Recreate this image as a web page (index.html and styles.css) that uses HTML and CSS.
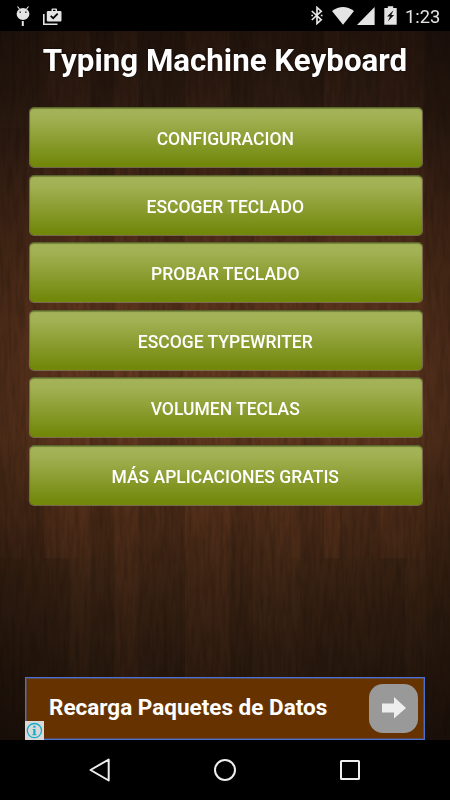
FILE: index.html
```html
<!DOCTYPE html>
<html lang="es">
<head>
    <meta charset="UTF-8">
    <meta name="viewport" content="width=device-width, initial-scale=1.0">
    <title>Typing Machine Keyboard</title>
    <link rel="stylesheet" href="styles.css">
</head>
<body>
    <div class="status-bar">
        <svg class="debug-icon" width="14" height="20" viewBox="0 0 14 20">
            <path d="M1.5 0.5L3.5 3M12.5 0.5L10.5 3" stroke="#e4e4e4" stroke-width="1.2"/>
            <ellipse cx="7" cy="8" rx="6.4" ry="6.1" fill="#e4e4e4"/>
            <path d="M6.8 15V20" stroke="#e4e4e4" stroke-width="2"/>
            <path d="M3.4 6.2h1.6M9 6.2h1.6" stroke="#222" stroke-width="1.3"/>
        </svg>
        <svg class="task-icon" width="19" height="18" viewBox="0 0 19 18">
            <path d="M0.8 6V16.2H14.5" fill="none" stroke="#e4e4e4" stroke-width="1.6"/>
            <path fill="#e4e4e4" fill-rule="evenodd" d="M5 3H8.5V1.5Q8.5 0.5 9.5 0.5H13Q14 0.5 14 1.5V3H17.3Q18.5 3 18.5 4.2V12.3Q18.5 13.5 17.3 13.5H5Q3.8 13.5 3.8 12.3V4.2Q3.8 3 5 3ZM10 1.8V3H12.5V1.8Z"/>
            <path d="M7.7 7.8L10.2 10.2L14.7 5.6" fill="none" stroke="#000" stroke-width="1.7"/>
        </svg>
        <span class="spacer"></span>
        <svg class="bluetooth-icon" width="12" height="19" viewBox="0 0 12 19">
            <path d="M0.8 5L10.2 13.8L6 17.5V1.5L10.2 5.2L0.8 14M0.3 9.5h1.7M9.8 9.5h1.7" fill="none" stroke="#e4e4e4" stroke-width="1.7"/>
        </svg>
        <svg class="wifi-icon" width="22" height="18" viewBox="0 0 22 18">
            <path d="M0 4Q11 -4 22 4L11 17.7Z" fill="#e4e4e4"/>
        </svg>
        <svg class="signal-icon" width="18" height="18" viewBox="0 0 18 18">
            <path d="M0 18L17.6 0V18Z" fill="#e4e4e4"/>
        </svg>
        <svg class="battery-icon" width="13" height="19" viewBox="0 0 13 19">
            <path d="M0.3 2H3.8V0.2H9.2V2H12.7V18.8H0.3Z" fill="#e4e4e4"/>
            <path d="M9.5 4.2L3 10.4H6L3.8 15.4L10.2 9H7.3Z" fill="#111"/>
        </svg>
        <span class="clock">1:23</span>
    </div>

    <div class="app">
        <svg class="wood" width="450" height="709" viewBox="0 0 450 709">
            <defs>
                <linearGradient id="shade" x1="0" y1="0" x2="0" y2="1">
                    <stop offset="0" stop-color="#23150d"/>
                    <stop offset="0.1" stop-color="#2c1b11"/>
                    <stop offset="0.21" stop-color="#412617"/>
                    <stop offset="0.33" stop-color="#54301b"/>
                    <stop offset="0.46" stop-color="#613820"/>
                    <stop offset="0.57" stop-color="#5f371f"/>
                    <stop offset="0.69" stop-color="#4c2c18"/>
                    <stop offset="0.78" stop-color="#3c2414"/>
                    <stop offset="0.88" stop-color="#2e1c10"/>
                    <stop offset="1" stop-color="#22150c"/>
                </linearGradient>
                <linearGradient id="sides">
                    <stop offset="0" stop-color="#000" stop-opacity="0.18"/>
                    <stop offset="0.2" stop-color="#000" stop-opacity="0"/>
                    <stop offset="0.8" stop-color="#000" stop-opacity="0"/>
                    <stop offset="1" stop-color="#000" stop-opacity="0.18"/>
                </linearGradient>
                <filter id="grain" x="0" y="0" width="100%" height="100%" color-interpolation-filters="sRGB">
                    <feTurbulence type="fractalNoise" baseFrequency="0.25 0.03" numOctaves="3" seed="4"/>
                    <feColorMatrix values="0 0 0 0 0  0 0 0 0 0  0 0 0 0 0  1.2 0 0 0 -0.45"/>
                </filter>
            </defs>
            <rect width="450" height="709" fill="url(#shade)"/>
            <g fill="#000" opacity="0.1">
                <rect x="0" y="97" width="26" height="430" opacity="0.4"/>
                <rect x="90" width="24" height="709"/>
                <rect x="138" width="23" height="709" opacity="0.6"/>
                <rect x="161" width="24" height="709" opacity="0.8"/>
                <rect x="230" width="23" height="709" opacity="0.7"/>
                <rect x="300" width="24" height="709" opacity="0.8"/>
                <rect x="26" y="470" width="18" height="57"/>
                <rect x="340" y="470" width="40" height="57" opacity="0.8"/>
                <rect x="324" y="527" width="81" height="182"/>
                <rect x="324" y="527" width="16" height="68"/>
                <rect x="0" y="527" width="69" height="182"/>
                <rect x="425" width="25" height="709" opacity="0.6"/>
            </g>
            <g fill="#9a5c30" opacity="0.04">
                <rect x="44" y="0" width="46" height="527"/>
                <rect x="115" width="23" height="709"/>
                <rect x="185" width="45" height="709"/>
                <rect x="277" y="491" width="22" height="36"/>
                <rect x="324" y="0" width="16" height="527"/>
                <rect x="380" y="0" width="44" height="527"/>
            </g>
            <rect width="450" height="709" filter="url(#grain)" opacity="0.3"/>
            <rect width="450" height="709" fill="url(#sides)"/>
        </svg>

        <h1>Typing Machine Keyboard</h1>

        <div class="menu">
            <button>CONFIGURACION</button>
            <button>ESCOGER TECLADO</button>
            <button>PROBAR TECLADO</button>
            <button>ESCOGE TYPEWRITER</button>
            <button>VOLUMEN TECLAS</button>
            <button>MÁS APLICACIONES GRATIS</button>
        </div>

        <div class="ad">
            <span class="ad-text">Recarga Paquetes de Datos</span>
            <div class="ad-arrow">
                <svg width="24" height="22" viewBox="0 0 24 22">
                    <path d="M0 6.5H12V0L24 11L12 21.5V15.5H0Z" fill="#eee"/>
                </svg>
            </div>
            <svg class="ad-info" width="19" height="19" viewBox="0 0 19 19">
                <rect width="19" height="19" fill="#d9d9d9"/>
                <circle cx="9.4" cy="9.6" r="7.1" fill="none" stroke="#11aecd" stroke-width="1.3"/>
                <path d="M8.3 4.8h2.2v2H8.3zM7.7 8h2.8v5.2h0.9v1H7.4v-1h0.9V9h-0.6z" fill="#11aecd"/>
            </svg>
        </div>
    </div>

    <div class="nav-bar">
        <svg width="24" height="26" viewBox="0 0 24 26">
            <path d="M2.5 13L20.7 2.5V23.5Z" fill="none" stroke="#eee" stroke-width="2" stroke-linejoin="round"/>
        </svg>
        <svg width="24" height="26" viewBox="0 0 24 26">
            <circle cx="12" cy="13" r="10" fill="none" stroke="#eee" stroke-width="2"/>
        </svg>
        <svg width="24" height="26" viewBox="0 0 24 26">
            <rect x="3" y="4" width="18" height="18" rx="0.5" fill="none" stroke="#eee" stroke-width="2"/>
        </svg>
    </div>
</body>
</html>
```

FILE: styles.css
```css
body {
    font-family: Roboto, sans-serif;
    display: flex;
    flex-direction: column;
    height: 800px;
    margin: 0;
    background-color: #000;
    color: #fff;
    overflow: hidden;
}

.status-bar {
    display: flex;
    align-items: flex-start;
    box-sizing: border-box;
    height: 31px;
    padding: 6px 10px 0 15.5px;
}

.task-icon {
    margin: 2px 0 0 13.5px;
}

.spacer {
    flex: 1;
}

.bluetooth-icon {
    margin-right: 9px;
}

.wifi-icon {
    margin: 1px 3px 0 0;
}

.signal-icon {
    margin: 1px 9.5px 0 0;
}

.battery-icon {
    margin-right: 8px;
}

.clock {
    width: 35px;
    font-size: 18.3px;
    line-height: 21px;
    color: #e4e4e4;
    white-space: nowrap;
}

.app {
    position: relative;
    display: flex;
    flex-direction: column;
    height: 709px;
}

/* wood planks behind the whole screen */
.wood {
    position: absolute;
    top: 0;
    left: 0;
    z-index: -1;
}

h1 {
    margin: 9px 0 0;
    height: 67px;
    font-size: 31.3px;
    line-height: 42px;
    font-weight: bold;
    text-align: center;
    white-space: nowrap;
    text-shadow: 0 0 2px #000;
}

.menu {
    display: flex;
    flex-direction: column;
    gap: 6.5px;
    padding: 0 27.5px 0 29px;
}

button {
    height: 61px;
    padding: 3px 1px 0 0;
    border: 1px solid rgba(150, 140, 110, 0.65);
    border-top-color: #5b6530;
    border-radius: 5px;
    background: linear-gradient(#a5b45a, #a1b052 18%, #72880b 95%);
    background-clip: padding-box;
    box-shadow: inset 0 1px 1px rgba(60, 75, 10, 0.45);
    color: #fff;
    font-family: inherit;
    font-size: 17.5px;
    font-weight: 500;
}

.ad {
    position: relative;
    display: flex;
    align-items: center;
    justify-content: space-between;
    box-sizing: border-box;
    width: 400px;
    height: 63px;
    margin: auto 25px 0;
    padding: 0 6px 1px 23px;
    border: 1px solid #4a70d0;
    background-color: #663300;
    box-shadow: inset 0 0 0 1px rgba(74, 112, 208, 0.4);
}

.ad-text {
    font-size: 22.5px;
    font-weight: bold;
    line-height: 26px;
    padding-bottom: 2px;
}

.ad-arrow {
    display: flex;
    align-items: center;
    justify-content: center;
    width: 49px;
    height: 49px;
    border-radius: 14px;
    background-color: #999;
}

.ad-info {
    position: absolute;
    left: -1px;
    bottom: -1px;
}

.nav-bar {
    display: flex;
    align-items: center;
    justify-content: center;
    gap: 101px;
    height: 60px;
}
```
